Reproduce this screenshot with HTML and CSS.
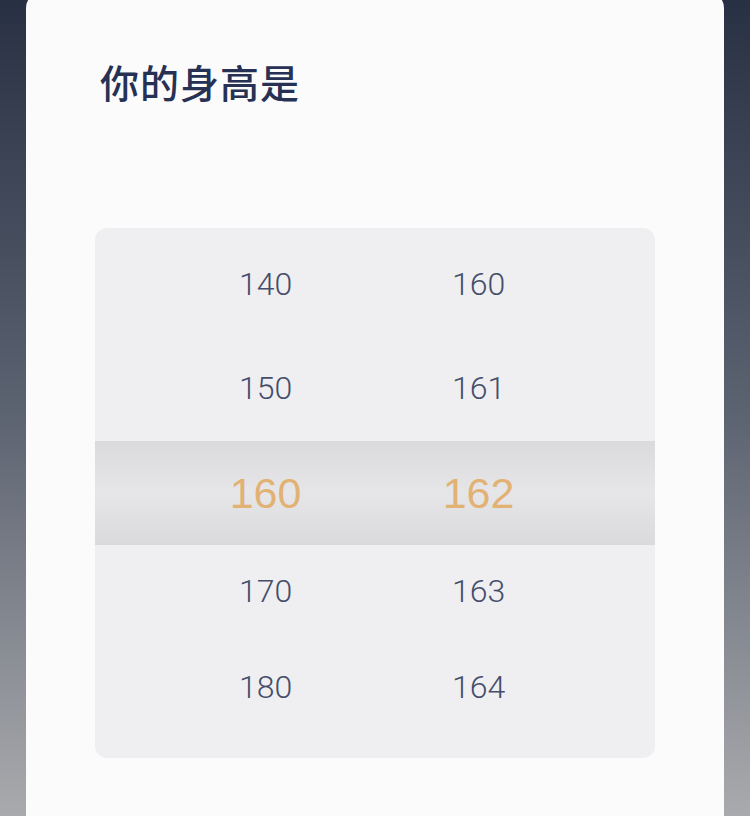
FILE: index.html
```html
<!DOCTYPE html>
<html lang="zh">
<head>
<meta charset="utf-8">
<link rel="stylesheet" href="styles.css">
</head>
<body>
<div class="page">
  <div class="card">
    <h1 class="title">你的身高是</h1>
    <div class="picker">
      <div class="band"></div>
      <div class="cols">
        <div class="col">
          <div class="item r1">140</div>
          <div class="item r2">150</div>
          <div class="item sel">160</div>
          <div class="item r4">170</div>
          <div class="item r5">180</div>
        </div>
        <div class="col">
          <div class="item r1">160</div>
          <div class="item r2">161</div>
          <div class="item sel">162</div>
          <div class="item r4">163</div>
          <div class="item r5">164</div>
        </div>
      </div>
    </div>
  </div>
</div>
</body>
</html>
```

FILE: styles.css
```css
html, body {
  margin: 0;
  padding: 0;
  height: 816px;
  overflow: hidden;
}
body {
  background: linear-gradient(to bottom, #283043 0%, #5b6270 50%, #a9aaad 100%);
  font-family: Roboto, "Liberation Sans", "Noto Sans CJK SC", sans-serif;
}
.page {
  padding: 0 26px;
  height: 816px;
}
.card {
  margin-top: -8px;
  background: #fbfbfb;
  border-radius: 16px 16px 0 0;
  height: 824px;
  padding: 1px 69px 0 69px;
  box-sizing: border-box;
}
.title {
  margin: 59px 0 0 5px;
  font-family: "Noto Sans CJK SC", sans-serif;
  font-size: 39px;
  font-weight: 500;
  line-height: 58px;
  color: #263154;
  letter-spacing: 1px;
}
.picker {
  position: relative;
  margin-top: 118px;
  height: 530px;
  background: #efeff1;
  border-radius: 12px;
  overflow: hidden;
}
.band {
  position: absolute;
  left: 0;
  right: 0;
  top: 213px;
  height: 104px;
  background: linear-gradient(to bottom, #dadadd 0%, #e6e6e8 50%, #dadadd 100%);
}
.cols {
  position: relative;
  display: grid;
  grid-template-columns: 213px 213px;
  padding-left: 64px;
}
.col {
  display: flex;
  flex-direction: column;
}
.item {
  text-align: center;
  font-size: 32px;
  font-weight: 300;
  color: #454d6b;
  height: 96px;
  line-height: 96px;
}
.r1 { margin-top: 8px; }
.r2 { margin-top: 8px; }
.sel {
  margin-top: 8px;
  height: 98px;
  line-height: 98px;
  padding-bottom: 6px;
  font-family: "Liberation Sans", sans-serif;
  font-size: 43px;
  font-weight: 400;
  color: #e2b274;
}
.r4 { margin-top: -5px; }
.r5 { margin-top: 0; }
```
